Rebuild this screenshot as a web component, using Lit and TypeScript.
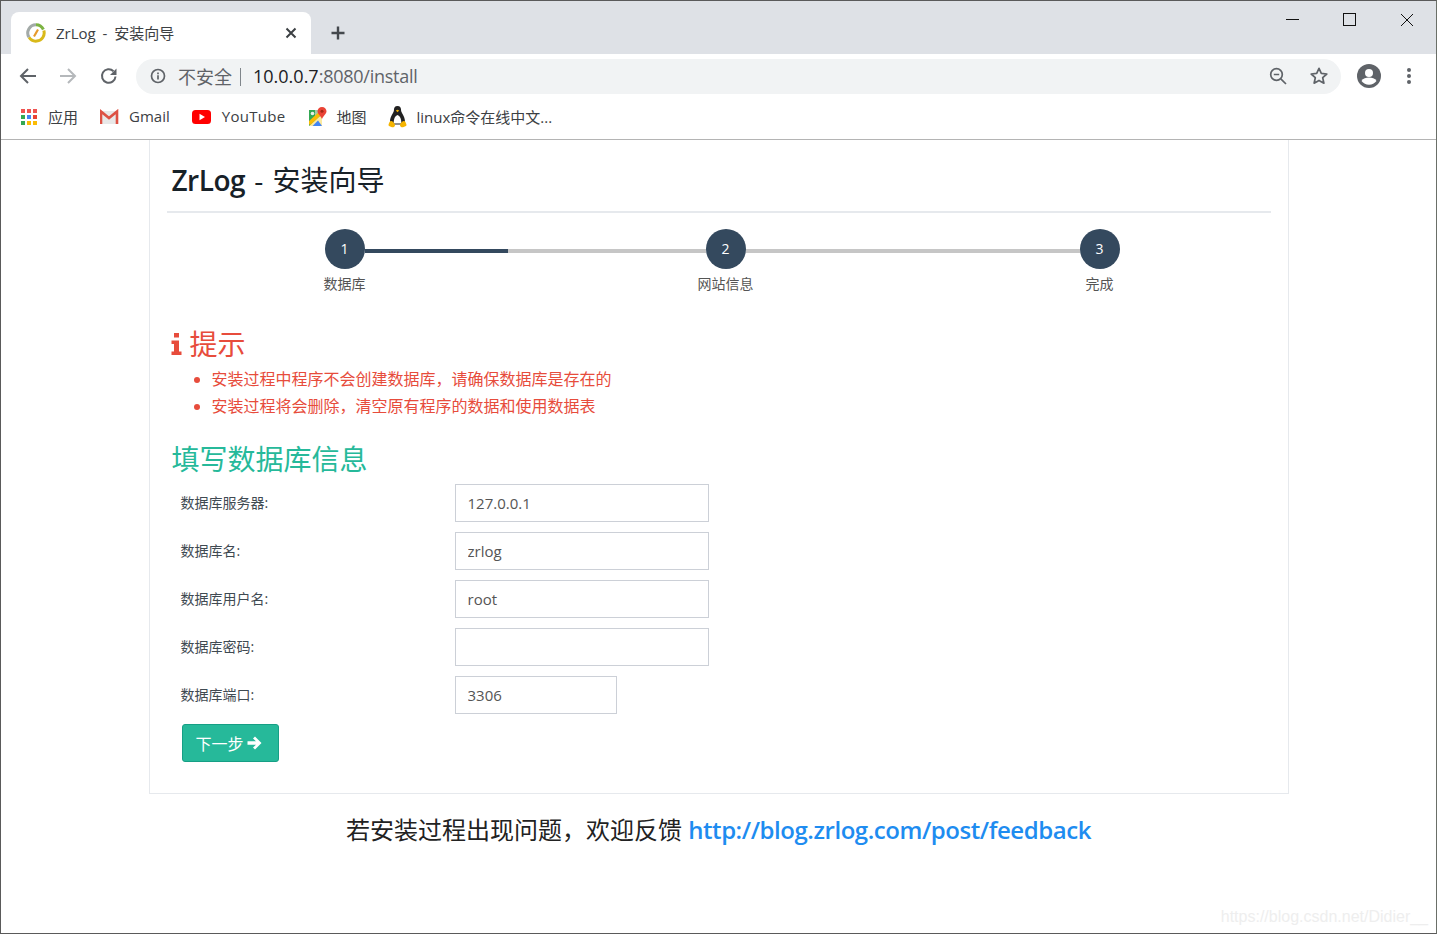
import { LitElement, html, css, svg } from "lit";
import { customElement } from "lit/decorators.js";

const grid = () => {
  const colors = ["#ef5350","#ef5350","#ef5350","#34a853","#4285f4","#ea4335","#34a853","#fbbc05","#fbbc05"];
  return colors.map((c, i) => svg`<rect x=${1 + (i % 3) * 6} y=${1 + Math.floor(i / 3) * 6} width="4" height="4" fill=${c}/>`);
};

@customElement("app-root")
export class AppRoot extends LitElement {
  static styles = css`
    :host { display: block; width: 1437px; height: 934px; box-sizing: border-box; border: 1px solid #5a5a5a; border-right-color: #6a6f68; background: #fff; font-family: "Open Sans", "Noto Sans CJK SC", sans-serif; color: #333; overflow: hidden; }
    .tabs { height: 53px; background: #dee1e6; display: flex; align-items: flex-end; padding-left: 10px; position: relative; }
    .tab { width: 300px; height: 42px; background: #fff; border-radius: 8px 8px 0 0; display: flex; align-items: center; box-sizing: border-box; padding: 0 14px 0 15px; }
    .tab-title { flex: 1; margin-left: 10px; padding-bottom: 2px; font-size: 15px; word-spacing: 3px; color: #3c4043; }
    .new-tab { margin: 0 0 13px 19px; }
    .winctl { position: absolute; top: 0; right: 6px; display: flex; }
    .winctl svg { display: block; }
    .toolbar { height: 45px; display: flex; align-items: center; box-sizing: border-box; padding: 0 0 0 17px; }
    .nav { display: flex; gap: 20px; align-items: center; padding-bottom: 2px; }
    .omni { margin-left: 18px; width: 1205px; height: 35px; border-radius: 18px; background: #f1f3f4; display: flex; align-items: center; box-sizing: border-box; padding: 0 12px 0 14px; font-size: 18px; white-space: nowrap; }
    .omni span { padding-bottom: 2px; }
    .omni > svg { margin-bottom: 1px; }
    .insecure { color: #5f6368; margin-left: 12px; }
    .omni .sep { width: 1px; height: 18px; background: #80868b; margin: 0 12px 0 8px; padding: 0; }
    .host { color: #202124; }
    .path { color: #5f6368; flex: 1; letter-spacing: -0.25px; }
    .omni-icons { display: flex; gap: 21px; align-items: center; padding-bottom: 2px; }
    .tool-right { display: flex; align-items: center; margin-left: 16px; gap: 26px; padding-bottom: 2px; }
    .bookmarks { height: 36px; padding: 0 0 4px 19px; display: flex; align-items: center; gap: 22px; font-size: 15px; color: #3c4043; border-bottom: 1px solid #b4b4b4; }
    .bm { display: flex; align-items: center; gap: 10px; white-space: nowrap; }
    .bm span { padding-bottom: 2px; }
    .bm svg { display: block; flex: none; }
    .bm.yt { gap: 11px; letter-spacing: 0.3px; }
    .bm.tux { margin-left: -1px; }
    .content { display: flex; flex-direction: column; align-items: center; position: relative; height: 793px; }
    .card { width: 1140px; height: 654px; box-sizing: border-box; border: 1px solid #e6e9ed; border-top: none; padding: 0 17px; }
    .title { margin: 0; height: 71px; box-sizing: border-box; padding: 23px 0 0 5px; font-size: 28px; line-height: 34px; font-weight: 400; color: #172128; word-spacing: 2px; }
    .title b { font-weight: 600; letter-spacing: -0.5px; }
    .rule { height: 2px; background: #e6e9ed; }
    .steps { display: flex; padding: 16px 0 0 158px; height: 110px; box-sizing: border-box; }
    .step { width: 40px; display: flex; flex-direction: column; align-items: center; flex: none; }
    .circle { width: 40px; height: 40px; box-sizing: border-box; padding-bottom: 2px; border-radius: 50%; background: #34495e; color: #fff; font-size: 14px; display: flex; align-items: center; justify-content: center; flex: none; }
    .lbl { margin-top: 6px; font-size: 14px; line-height: 18px; color: #555; white-space: nowrap; }
    .conn { height: 4px; margin-top: 20px; background: #c6c6c6; flex: none; }
    .c1 { width: 341px; background: linear-gradient(to right, #34495e 42%, #c6c6c6 42%); }
    .c2 { width: 334px; }
    .tip { margin: 0 0 0 4px; padding-bottom: 2px; box-sizing: border-box; color: #e74c3c; font-size: 28px; line-height: 36px; font-weight: 400; height: 43px; display: flex; align-items: center; gap: 8px; }
    ul { margin: 0 0 0 5px; padding: 0 0 0 40px; color: #e74c3c; font-size: 16px; line-height: 27px; }
    .fill { margin: 19px 0 1px 5px; color: #26b99a; font-size: 28px; line-height: 40px; font-weight: 400; height: 44px; }
    form { display: flex; flex-direction: column; gap: 10px; }
    .row { display: flex; align-items: center; height: 38px; padding-left: 14px; }
    label { width: 274px; box-sizing: border-box; padding-bottom: 2px; font-size: 14px; color: #3f4a52; flex: none; }
    .input { width: 254px; height: 38px; box-sizing: border-box; border: 1px solid #ccd0d7; padding: 0 12px; font: inherit; font-size: 15px; color: #555; background: #fff; outline: none; }
    .input.short { width: 162px; }
    .btn { align-self: flex-start; margin-left: 15px; width: 97px; height: 38px; box-sizing: border-box; background: #26b99a; border: 1px solid #169f85; border-radius: 3px; color: #fff; font: inherit; font-size: 16px; display: flex; align-items: center; justify-content: center; gap: 3px; padding: 0 3px 0 0; }
    .foot { margin-top: 19px; font-size: 24px; line-height: 34px; color: #222; white-space: nowrap; }
    .foot a { color: #1e8cf0; text-decoration: none; font-weight: 600; letter-spacing: -0.45px; }
    .mark { position: absolute; right: 8px; bottom: 7px; font-family: "Liberation Sans", sans-serif; font-size: 16px; color: #eeeeee; }
  `;

  render() {
    const fields = [
      ["数据库服务器:", "127.0.0.1", ""],
      ["数据库名:", "zrlog", ""],
      ["数据库用户名:", "root", ""],
      ["数据库密码:", "", ""],
      ["数据库端口:", "3306", "short"],
    ];
    return html`
      <div class="tabs">
        <div class="tab">
          <svg width="20" height="20" viewBox="0 0 20 20"><circle cx="10" cy="10" r="7" fill="#fff"/><path d="M10 1.800a8.200 8.200 0 0 1 7.400 4.700" stroke="#7cb342" stroke-width="3" fill="none"/><path d="M17.800 7.500a8.200 8.200 0 0 1-7 10.600A8.200 8.200 0 0 1 3 14.300" stroke="#d9b91a" stroke-width="3" fill="none"/><path d="M3 14.300A8.200 8.200 0 0 1 10 1.800" stroke="#a3aaa8" stroke-width="3" fill="none"/><path d="M8 13.500 12 6.500" stroke="#e69a2c" stroke-width="2.200"/></svg>
          <span class="tab-title">ZrLog - 安装向导</span>
          <svg width="12" height="12" viewBox="0 0 12 12"><path d="M1.500 1.500 10.500 10.500M10.500 1.500 1.500 10.500" stroke="#3c4043" stroke-width="2"/></svg>
        </div>
        <svg class="new-tab" width="16" height="16" viewBox="0 0 16 16"><path d="M8 1.500v13M1.500 8h13" stroke="#44484d" stroke-width="2.400"/></svg>
        <div class="winctl">
          <svg width="172" height="40" viewBox="0 0 172 40"><path d="M28 18.500h13" stroke="#111" fill="none"/><rect x="85.500" y="12.500" width="12" height="12" stroke="#111" fill="none"/><path d="M143 13 155 25M155 13 143 25" stroke="#111" fill="none"/></svg>
        </div>
      </div>
      <div class="toolbar">
        <div class="nav">
          <svg width="20" height="20" viewBox="0 0 20 20"><path d="M18 10H3.500M10 3 3 10l7 7" stroke="#5f6368" stroke-width="2" fill="none"/></svg>
          <svg width="20" height="20" viewBox="0 0 20 20"><path d="M2 10h14.500M10 3l7 7-7 7" stroke="#b5b8bb" stroke-width="2" fill="none"/></svg>
          <svg width="20" height="20" viewBox="-1 0 20 20"><path d="M16.500 10.500A6.800 6.800 0 1 1 14.500 5.200" stroke="#5f6368" stroke-width="2" fill="none"/><path d="M17.500 2.500v6.500h-6.500z" fill="#5f6368"/></svg>
        </div>
        <div class="omni">
          <svg width="16" height="16" viewBox="0 0 16 16"><circle cx="8" cy="8" r="6.500" stroke="#5f6368" stroke-width="1.700" fill="none"/><path d="M8 7.200v4.300M8 4.500v1.700" stroke="#5f6368" stroke-width="1.700"/></svg>
          <span class="insecure">不安全</span><span class="sep"></span><span class="host">10.0.0.7</span><span class="path">:8080/install</span>
          <div class="omni-icons">
            <svg width="20" height="20" viewBox="0 0 20 20"><circle cx="8.500" cy="8.500" r="5.800" stroke="#5f6368" stroke-width="1.700" fill="none"/><path d="M5.800 8.500h5.400M12.800 12.800 18 18" stroke="#5f6368" stroke-width="1.700"/></svg>
            <svg width="20" height="20" viewBox="0 0 20 20"><path d="M10 2.300l2.300 5.100 5.500.6-4.100 3.700 1.200 5.500L10 14.400 5.100 17.200l1.200-5.500L2.200 8l5.500-.6z" stroke="#5f6368" stroke-width="1.700" fill="none" stroke-linejoin="round"/></svg>
          </div>
        </div>
        <div class="tool-right">
          <svg width="24" height="24" viewBox="0 0 24 24"><circle cx="12" cy="12" r="12" fill="#5f6368"/><circle cx="12" cy="9" r="4" fill="#fff"/><path d="M4.500 17c1.500-2.600 4.500-3.500 7.500-3.500s6 .9 7.500 3.500c-1.800 2.300-4.500 3.700-7.500 3.700s-5.700-1.400-7.500-3.700z" fill="#fff"/></svg>
          <svg width="4" height="18" viewBox="0 0 4 18"><circle cx="2" cy="3" r="2" fill="#5f6368"/><circle cx="2" cy="9" r="2" fill="#5f6368"/><circle cx="2" cy="15" r="2" fill="#5f6368"/></svg>
        </div>
      </div>
      <div class="bookmarks">
        <div class="bm"><svg width="18" height="18" viewBox="0 0 18 18">${grid()}</svg><span>应用</span></div>
        <div class="bm"><svg width="19" height="16" viewBox="1 0 19 16"><path d="M2 2h16v13H2z" fill="#e8e8e8"/><path d="M2 15V2.500l8 6.500 8-6.500V15" stroke="#dd5144" stroke-width="2.600" fill="none"/></svg><span>Gmail</span></div>
        <div class="bm yt"><svg width="19" height="14" viewBox="0 0 19 14"><rect width="19" height="14" rx="3.500" fill="#f00"/><path d="M7.500 3.800 13 7l-5.500 3.200z" fill="#fff"/></svg><span>YouTube</span></div>
        <div class="bm"><svg width="19" height="20" viewBox="0 0 19 20"><path d="M1 3h13v16H1z" fill="#34a853"/><path d="M7 3h7v6H7z" fill="#a7c7a0"/><path d="M1 19 13 8h1v11z" fill="#fbe9a0"/><path d="M4.500 19 10 13.500 14 19z" fill="#4285f4"/><path d="M1 14 11 5l2 3L3 17.500H1z" fill="#fbbc05"/><circle cx="4.500" cy="6.500" r="1.800" fill="#e8f0e8"/><path d="M14 0c2.500 0 4.500 2 4.500 4.300 0 2.600-3 4.400-4.500 7.700-1.500-3.300-4.500-5.100-4.500-7.700C9.500 2 11.500 0 14 0z" fill="#ea4335"/><circle cx="14" cy="4.300" r="1.500" fill="#a52714"/></svg><span>地图</span></div>
        <div class="bm tux"><svg width="19" height="22" viewBox="0 0 19 22"><path d="M9.500 0C6.800 0 5.800 2 5.900 4.500 6 6.500 2 10 2 15.500c0 1.500.5 2.500 1 3h13c.5-.5 1-1.500 1-3C17 10 13 6.500 13.100 4.500 13.200 2 12.200 0 9.500 0z" fill="#222"/><path d="M9.500 9c-2.300.8-4 4-3.800 8.500h7.600C13.500 13 11.800 9.800 9.500 9z" fill="#fff"/><path d="M7.800 4.600 9.500 3.800l1.700.8-1.700 1.600z" fill="#f5b400"/><path d="M.5 18.700c.5-2 1.200-4 2.800-3.800 1.700.2 3.700 2.800 3.700 4.300S5.300 21.500 4 21.200C2.500 20.800.2 20 .5 18.700zM18.500 18.700c-.5-2-1.200-4-2.800-3.800-1.700.2-3.700 2.800-3.700 4.300s1.700 2.300 3 2c1.500-.4 3.800-1.200 3.500-2.500z" fill="#f5b400"/></svg><span>linux命令在线中文...</span></div>
      </div>
      <div class="content">
        <div class="card">
          <h1 class="title"><b>ZrLog</b> - 安装向导</h1>
          <div class="rule"></div>
          <div class="steps">
            <div class="step"><div class="circle">1</div><div class="lbl">数据库</div></div>
            <div class="conn c1"></div>
            <div class="step"><div class="circle">2</div><div class="lbl">网站信息</div></div>
            <div class="conn c2"></div>
            <div class="step"><div class="circle">3</div><div class="lbl">完成</div></div>
          </div>
          <h2 class="tip"><svg width="11" height="22" viewBox="0 0 11 22"><path d="M3 0h5v4.500H3zM.5 7.500H8v11h2.500V22H.5v-3.500H3v-7.500H.5z" fill="#e74c3c"/></svg><span>提示</span></h2>
          <ul>
            <li>安装过程中程序不会创建数据库，请确保数据库是存在的</li>
            <li>安装过程将会删除，清空原有程序的数据和使用数据表</li>
          </ul>
          <h2 class="fill">填写数据库信息</h2>
          <form>
            ${fields.map(([l, v, c]) => html`<div class="row"><label>${l}</label><input class="input ${c}" .value=${v} /></div>`)}
            <button class="btn" type="button">下一步<svg width="15" height="14" viewBox="0 0 15 14"><path d="M8 .5 14.500 7 8 13.500 6 11.500 9 8.700H.5V5.300H9L6 2.500z" fill="#fff"/></svg></button>
          </form>
        </div>
        <div class="foot">若安装过程出现问题，欢迎反馈 <a href="#">http://blog.zrlog.com/post/feedback</a></div>
        <div class="mark">https://blog.csdn.net/Didier__</div>
      </div>
    `;
  }
}
